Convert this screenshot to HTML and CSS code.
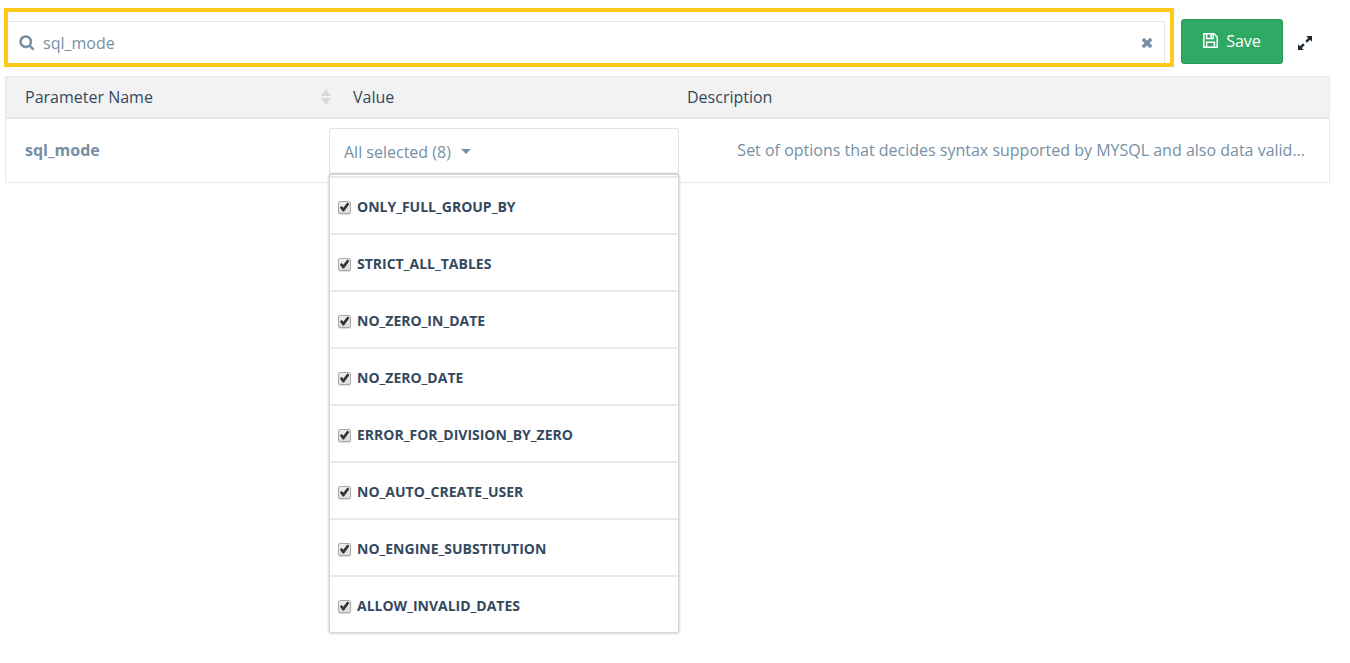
FILE: index.html
```html
<!DOCTYPE html>
<html lang="en">
<head>
<meta charset="utf-8">
<title>Server parameters</title>
<link rel="stylesheet" href="styles.css">
</head>
<body>
<main class="page">
  <div class="toolbar">
    <div class="search-highlight">
      <form class="search" role="search">
        <label class="search-label" for="search" aria-label="Search parameters">
          <svg class="icon-search" viewBox="0 0 16 16" aria-hidden="true"><circle cx="6.7" cy="6.7" r="5.2"/><path d="M10.6 10.6 14.6 14.6"/></svg>
        </label>
        <input class="search-input" id="search" type="text" value="sql_mode">
        <button class="icon-button" type="reset" aria-label="Clear search">
          <svg class="icon-clear" viewBox="0 0 12 12" aria-hidden="true"><path d="M1.8 2 10.2 10M10.2 2 1.8 10"/></svg>
        </button>
      </form>
    </div>
    <button class="save" type="button">
      <svg class="icon-save" viewBox="0 0 15 15" aria-hidden="true"><path d="M.8.8H11L14.2 4V14.2H.8ZM3.6.8V5.4H10.2V.8M3.6 14.2V9.2H11.4V14.2"/><path class="solid" d="M7.2 1.5H9V4.6H7.2Z"/></svg>
      Save
    </button>
    <button class="icon-button" type="button" aria-label="Expand">
      <svg class="icon-expand" viewBox="0 0 14 14" aria-hidden="true"><path class="solid" d="M8.3 0H14V5.7L12 3.8 9 6.7 7.3 5 10.2 2ZM5.7 14H0V8.3L2 10.2 5 7.3 6.7 9 3.8 12Z"/></svg>
    </button>
  </div>

  <table class="params">
    <thead>
      <tr>
        <th class="col-name" scope="col">
          <span class="head">Parameter Name
            <svg class="icon-sort" viewBox="0 0 10 16" aria-hidden="true"><path d="M5 0 10 7H0ZM0 9H10L5 16Z"/></svg>
          </span>
        </th>
        <th class="col-value" scope="col">Value</th>
        <th class="col-desc" scope="col">Description</th>
      </tr>
    </thead>
    <tbody>
      <tr>
        <td class="name">sql_mode</td>
        <td class="value">
          <div class="dropdown">
            <button class="dropdown-toggle" type="button" aria-expanded="true" aria-controls="modes">All selected (8)<span class="caret"></span></button>
            <ul class="menu" id="modes">
              <li><label class="option"><input class="check" type="checkbox" checked>ONLY_FULL_GROUP_BY</label></li>
              <li><label class="option"><input class="check" type="checkbox" checked>STRICT_ALL_TABLES</label></li>
              <li><label class="option"><input class="check" type="checkbox" checked>NO_ZERO_IN_DATE</label></li>
              <li><label class="option"><input class="check" type="checkbox" checked>NO_ZERO_DATE</label></li>
              <li><label class="option"><input class="check" type="checkbox" checked>ERROR_FOR_DIVISION_BY_ZERO</label></li>
              <li><label class="option"><input class="check" type="checkbox" checked>NO_AUTO_CREATE_USER</label></li>
              <li><label class="option"><input class="check" type="checkbox" checked>NO_ENGINE_SUBSTITUTION</label></li>
              <li><label class="option"><input class="check" type="checkbox" checked>ALLOW_INVALID_DATES</label></li>
            </ul>
          </div>
        </td>
        <td class="desc">Set of options that decides syntax supported by MYSQL and also data valid...</td>
      </tr>
    </tbody>
  </table>
</main>
</body>
</html>
```
FILE: styles.css
```css
* {
  box-sizing: border-box;
}

body {
  margin: 0;
  background: #fff;
  color: #768fa5;
  font: 16px/24px "Open Sans", "Noto Sans", sans-serif;
}

button,
input {
  font: inherit;
  color: inherit;
}

.page {
  min-height: 100vh;
  padding: 8px 20px 0 4px;
}

.toolbar {
  display: flex;
  align-items: flex-start;
  padding-right: 16px;
}

.search-highlight {
  flex: 1;
  border: 4px solid #ffc91a;
  padding: 9px 5px 0 0;
}

.search {
  display: flex;
  align-items: center;
  height: 42px;
  padding: 0 9px 0 11px;
  border: 1px solid #e3e6e9;
  border-width: 1px 1px 0 0;
}

.search-label {
  display: flex;
}

.search-input {
  flex: 1;
  min-width: 0;
  margin-left: 8px;
  padding: 0;
  border: 0;
  background: none;
  outline: 0;
}

.icon-button {
  display: flex;
  padding: 2px;
  border: 0;
  background: none;
}

svg {
  fill: none;
  stroke: currentColor;
}

.solid {
  fill: currentColor;
  stroke: none;
}

.icon-search {
  width: 16px;
  height: 16px;
  stroke-width: 2.6;
}

.icon-clear {
  width: 12px;
  height: 12px;
  stroke-width: 3.4;
}

.save {
  display: flex;
  align-items: center;
  justify-content: center;
  gap: 8px;
  width: 102px;
  height: 45px;
  margin: 11px 13px 0 7px;
  padding: 0 0 2px;
  border: 1px solid #279656;
  border-radius: 3px;
  background: #2faa64;
  color: #fff;
}

.icon-save {
  width: 15px;
  height: 15px;
  stroke-width: 1.5;
}

.toolbar > .icon-button {
  margin-top: 26px;
  color: #1f2a37;
}

.icon-expand {
  width: 14px;
  height: 14px;
}

.params {
  width: calc(100% - 1px);
  margin: 9px 0 0 1px;
  border: 1px solid #e6e8eb;
  border-spacing: 0;
  table-layout: fixed;
}

.params th {
  height: 42px;
  padding: 0;
  border-bottom: 2px solid #e4e8eb;
  background: #f2f2f2;
  color: #34495e;
  font-weight: 500;
  text-align: left;
}

.params td {
  height: 63px;
  padding: 0;
}

.params .col-name {
  width: 323px;
  padding-left: 19px;
}

.params .col-value {
  width: 350px;
  padding-left: 24px;
}

.params .col-desc {
  padding-left: 8px;
}

.head {
  display: flex;
  align-items: center;
  justify-content: space-between;
}

.icon-sort {
  width: 10px;
  height: 16px;
  margin-right: -2px;
  fill: #d9dadb;
  stroke: none;
}

.params .name {
  padding: 0 0 2px 19px;
  font-weight: 700;
}

.params .desc {
  padding: 0 24px 2px;
  text-align: right;
  white-space: nowrap;
}

.dropdown {
  position: relative;
}

.dropdown-toggle {
  display: flex;
  align-items: center;
  gap: 10px;
  width: 100%;
  height: 46px;
  padding: 2px 14px 0;
  border: 1px solid #e1e5e9;
  border-radius: 2px;
  background: #fff;
}

.caret {
  border: 5px solid transparent;
  border-top-color: currentColor;
  border-bottom: 0;
}

.menu {
  position: absolute;
  z-index: 10;
  top: 100%;
  left: 0;
  width: 100%;
  margin: 0;
  padding: 1px 0 0;
  border: 1px solid #d3d7de;
  border-radius: 2px;
  background: #fff;
  box-shadow: 0 0 3px #aab1be;
  list-style: none;
}

.option {
  display: flex;
  align-items: center;
  gap: 6px;
  height: 57px;
  padding: 4px 8px 0;
  border-top: 2px solid #e6eaee;
  color: #34495e;
  font-size: 14px;
  font-weight: 700;
}

.check {
  appearance: none;
  width: 13px;
  height: 13px;
  margin: 0;
  border: 1px solid #aaa;
  border-radius: 2px;
  background: linear-gradient(#eee, #ddd);
  box-shadow: 0 1px 1px #ddd;
}

.check:checked::before {
  content: "";
  display: block;
  height: 11px;
  background: #333;
  clip-path: polygon(8% 55%, 24% 40%, 40% 57%, 76% 8%, 95% 23%, 45% 91%, 34% 91%);
}
```
